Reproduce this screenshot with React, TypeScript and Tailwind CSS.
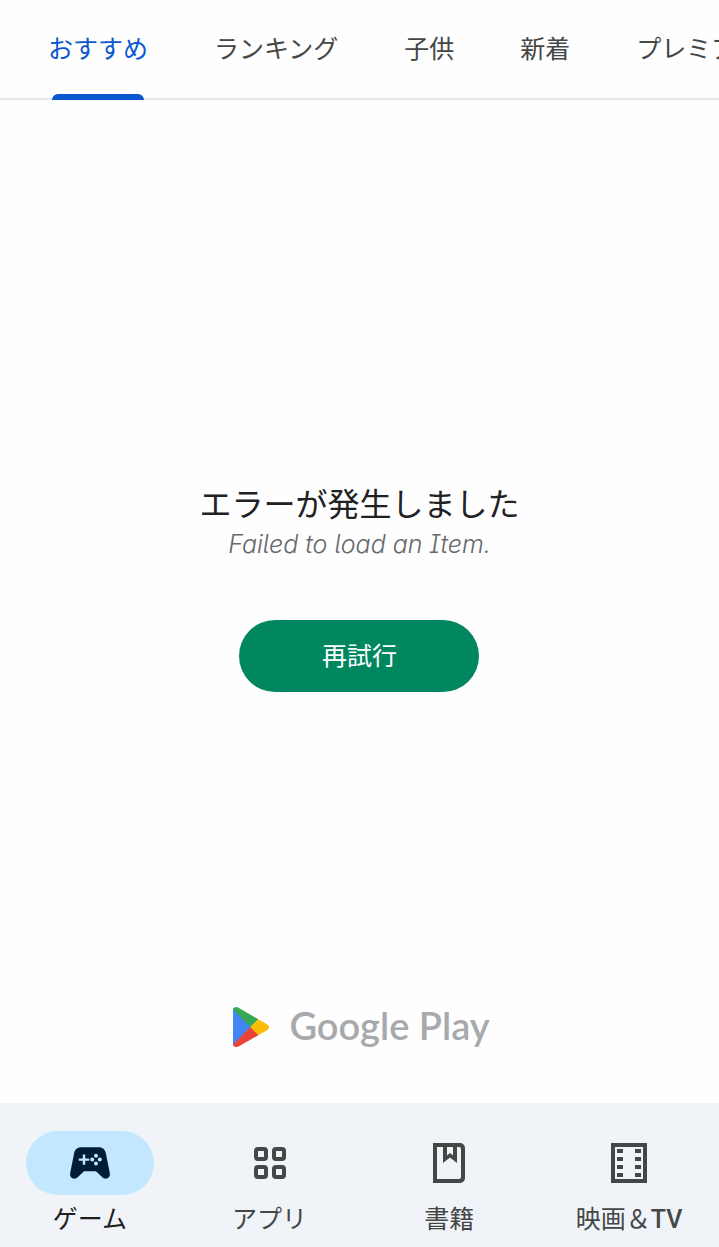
import type { ReactNode } from "react";

const tabs = ["おすすめ", "ランキング", "子供", "新着", "プレミアム"];

function GamesIcon() {
  return (
    <svg viewBox="0 0 24 24" className="size-12" aria-hidden="true">
      <path
        fill="#001d35"
        d="M7.6 4.1h8.800c1.900 0 3.200 1.100 3.500 2.900L21.900 17c.3 1.700-.6 2.800-2.100 2.800-.6 0-1.100-.2-1.500-.6L15 16.100H9l-3.300 3.100c-.4.4-.9.6-1.500.6-1.500 0-2.400-1.100-2.100-2.800L4.100 7c.3-1.800 1.600-2.900 3.500-2.900Z"
      />
      <g fill="#c2e7ff">
        <path d="M8.400 7.700h1.200v2h2v1.200h-2v2H8.400v-2h-2V9.700h2z" />
        <circle cx="15" cy="8.400" r="1" />
        <circle cx="15" cy="12.200" r="1" />
        <circle cx="13.100" cy="10.300" r="1" />
        <circle cx="16.900" cy="10.300" r="1" />
      </g>
    </svg>
  );
}

function AppsIcon() {
  return (
    <svg viewBox="0 0 24 24" className="size-12" fill="none" stroke="#444746" strokeWidth="2" aria-hidden="true">
      <rect x="5" y="5" width="5" height="5" rx="1" />
      <rect x="14" y="5" width="5" height="5" rx="1" />
      <rect x="5" y="14" width="5" height="5" rx="1" />
      <rect x="14" y="14" width="5" height="5" rx="1" />
    </svg>
  );
}

function BooksIcon() {
  return (
    <svg viewBox="0 0 24 24" className="size-12" fill="#444746" aria-hidden="true">
      <path
        fillRule="evenodd"
        d="M4 2h13.500A2.500 2.500 0 0 1 20 4.500v15a2.500 2.500 0 0 1-2.500 2.500H4zM6 4v16h11a1 1 0 0 0 1-1V5a1 1 0 0 0-1-1h-1v8l-3.500-2.800L9 12V4zM11 4v4.200l1.500-1.200L14 8.200V4z"
      />
    </svg>
  );
}

function MoviesIcon() {
  return (
    <svg viewBox="0 0 24 24" className="size-12" fill="#444746" aria-hidden="true">
      <path
        fillRule="evenodd"
        d="M3 2h18v20H3zM5 4v16h14V4zM6 5h3v2H6zM6 9h3v2H6zM6 13h3v2H6zM6 17h3v2H6zM15 5h3v2h-3zM15 9h3v2h-3zM15 13h3v2h-3zM15 17h3v2h-3z"
      />
    </svg>
  );
}

function PlayLogo() {
  return (
    <svg viewBox="0 0 36 40" className="h-10 w-9" aria-hidden="true">
      <clipPath id="play-shape">
        <path d="M0 2.500C.5.300 3-.600 5.500.700L33.500 17c3.300 1.900 3.300 4.600 0 6.500L5.500 39.500C3 40.700.5 39.700 0 37.500Z" />
      </clipPath>
      <g clipPath="url(#play-shape)">
        <path fill="#4285f4" d="M0 0v40L18 20Z" />
        <path fill="#34a853" d="M0 0v2.500L17.500 20 26 11.500V0Z" />
        <path fill="#ea4335" d="M0 40v-2.500L17.500 20 26 28.500V40Z" />
        <path fill="#fbbc04" d="M17.500 20 26 11.500l11 4v9l-11 4Z" />
      </g>
    </svg>
  );
}

const destinations: { label: ReactNode; icon: ReactNode }[] = [
  { label: "ゲーム", icon: <GamesIcon /> },
  { label: "アプリ", icon: <AppsIcon /> },
  { label: "書籍", icon: <BooksIcon /> },
  {
    label: (
      <>
        映画＆<span className="font-['Roboto',sans-serif] font-medium">TV</span>
      </>
    ),
    icon: <MoviesIcon />,
  },
];

export default function App() {
  return (
    <div className="flex min-h-screen flex-col overflow-hidden bg-[#fefefe] font-['Noto_Sans_CJK_JP',sans-serif]">
      <nav
        aria-label="カテゴリ"
        className="flex h-[100px] shrink-0 gap-[66px] overflow-hidden pl-12 shadow-[inset_0_-2px_0_#e5e6e6]"
      >
        {tabs.map((tab, i) => (
          <button
            key={tab}
            type="button"
            aria-current={i === 0 ? "page" : undefined}
            className={`relative shrink-0 pb-1 text-[25px] whitespace-nowrap ${i === 0 ? "text-[#0b57d0]" : "text-[#444746]"}`}
          >
            {tab}
            {i === 0 && <span className="absolute inset-x-1 bottom-0 h-1.5 rounded-t-md bg-[#0b57d0]" />}
          </button>
        ))}
      </nav>

      <main className="flex flex-1 flex-col items-center">
        <section className="flex flex-1 flex-col items-center justify-center pt-[72px]">
          <h1 className="text-[32px] leading-9 text-[#202124]">エラーが発生しました</h1>
          <p className="mt-1 mb-14 font-['Inter',sans-serif] text-[25px] leading-10 font-light text-[#66696c] italic [font-feature-settings:'cv05','cv08','cv11']">
            Failed to load an Item.
          </p>
          <button type="button" className="h-[72px] w-60 rounded-full bg-[#01875f] pb-0.5 text-[25px] text-white">
            再試行
          </button>
        </section>
        <div className="mb-[52px] flex h-12 items-center gap-5 pl-1">
          <PlayLogo />
          <span className="pb-1 font-['Lato',sans-serif] text-[38px] leading-10 font-semibold text-[#a7a9ac]">
            Google Play
          </span>
        </div>
      </main>

      <nav aria-label="メイン" className="grid h-36 shrink-0 grid-cols-4 bg-[#f0f4f9]">
        {destinations.map(({ label, icon }, i) => (
          <a
            key={i}
            href="#"
            aria-current={i === 0 ? "page" : undefined}
            className={`flex flex-col items-center gap-1.5 pt-7 text-[25px] leading-8 ${i === 0 ? "text-[#1f1f1f]" : "text-[#444746]"}`}
          >
            <span className={`flex h-16 w-32 items-center justify-center rounded-full ${i === 0 ? "bg-[#c2e7ff]" : ""}`}>
              {icon}
            </span>
            <span>{label}</span>
          </a>
        ))}
      </nav>
    </div>
  );
}
